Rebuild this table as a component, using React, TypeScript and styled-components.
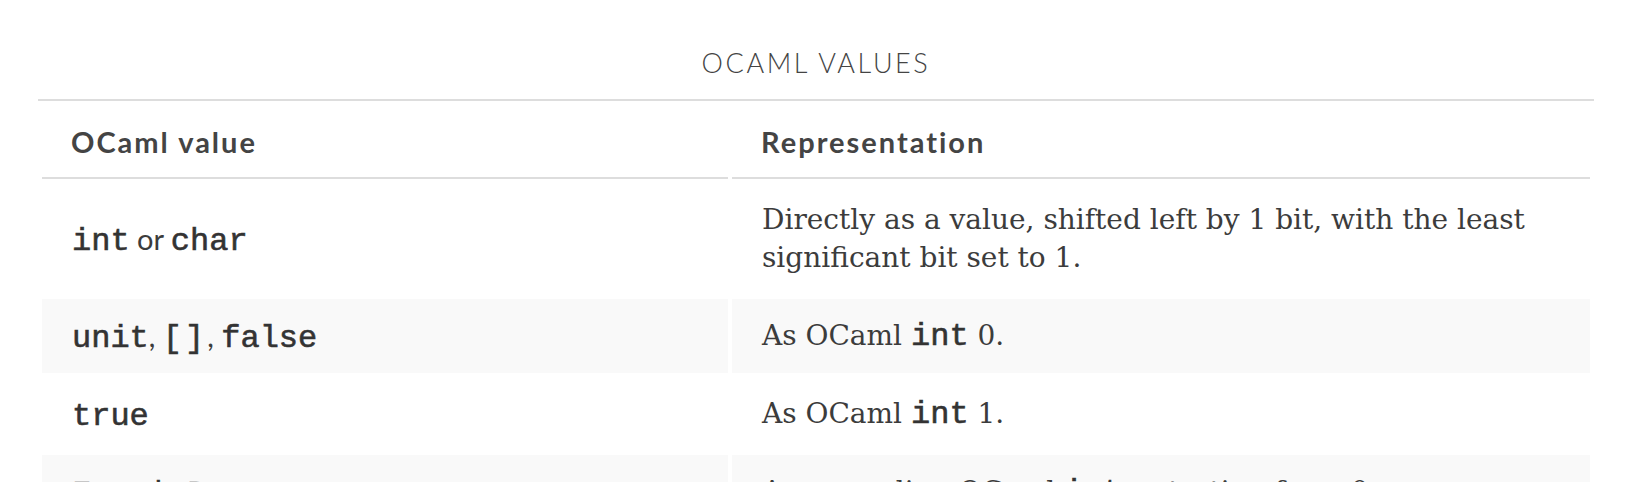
import React from "react";
import styled, { createGlobalStyle } from "styled-components";

const GlobalStyle = createGlobalStyle`
  * { box-sizing: border-box; }
  html, body { margin: 0; padding: 0; background: #ffffff; }
`;

const Page = styled.div`
  padding: 44px 0 0 38px;
`;

const Figure = styled.div`
  width: 1556px;
`;

const Title = styled.div`
  font-family: Lato, "Open Sans", sans-serif;
  font-weight: 300;
  font-size: 27px;
  letter-spacing: 2.6px;
  line-height: 38px;
  text-align: center;
  color: #444444;
  padding-bottom: 17px;
`;

const Table = styled.table`
  width: 1556px;
  table-layout: fixed;
  border-collapse: separate;
  border-spacing: 4px;
  border-top: 2px solid #dddddd;
`;

const HeadCell = styled.th<{ $first?: boolean }>`
  width: ${(p) => (p.$first ? "686px" : "auto")};
  text-align: left;
  font-family: Lato, "Open Sans", sans-serif;
  font-weight: 700;
  font-size: 29px;
  letter-spacing: 2px;
  line-height: 38px;
  color: #444444;
  padding: 18px 30px 16px 29px;
  border-bottom: 2px solid #dddddd;
`;

const Cell = styled.td<{ $alt?: boolean }>`
  padding: 18px 30px 18px 30px;
  line-height: 38px;
  vertical-align: middle;
  color: #3c3c3c;
  background: ${(p) => (p.$alt ? "#f9f9f9" : "transparent")};
`;

const ValueCell = styled(Cell)`
  font-family: Lato, "Open Sans", sans-serif;
  font-size: 29px;
`;

const DescCell = styled(Cell)`
  font-family: "DejaVu Serif", serif;
  font-size: 28px;
`;

const Code = styled.code<{ $spaced?: boolean }>`
  font-family: "Liberation Mono", monospace;
  font-weight: 400;
  font-size: 32px;
  line-height: 1;
  letter-spacing: ${(p) => (p.$spaced ? "3px" : "0")};
  color: #333333;
  -webkit-text-stroke: 0.6px #333333;
`;

type Row = { value: React.ReactNode; desc: React.ReactNode };

const rows: Row[] = [
  {
    value: (
      <>
        <Code>int</Code> or <Code>char</Code>
      </>
    ),
    desc: "Directly as a value, shifted left by 1 bit, with the least significant bit set to 1.",
  },
  {
    value: (
      <>
        <Code>unit</Code>, <Code $spaced>[]</Code>, <Code>false</Code>
      </>
    ),
    desc: (
      <>
        As OCaml <Code>int</Code> 0.
      </>
    ),
  },
  {
    value: <Code>true</Code>,
    desc: (
      <>
        As OCaml <Code>int</Code> 1.
      </>
    ),
  },
  {
    value: <Code>Foo | Bar</Code>,
    desc: (
      <>
        As ascending OCaml <Code>int</Code>s, starting from 0.
      </>
    ),
  },
];

export default function App() {
  return (
    <Page>
      <GlobalStyle />
      <Figure>
        <Title>OCAML VALUES</Title>
        <Table>
          <thead>
            <tr>
              <HeadCell $first>OCaml value</HeadCell>
              <HeadCell>Representation</HeadCell>
            </tr>
          </thead>
          <tbody>
            {rows.map((r, i) => (
              <tr key={i}>
                <ValueCell $alt={i % 2 === 1}>{r.value}</ValueCell>
                <DescCell $alt={i % 2 === 1}>{r.desc}</DescCell>
              </tr>
            ))}
          </tbody>
        </Table>
      </Figure>
    </Page>
  );
}
